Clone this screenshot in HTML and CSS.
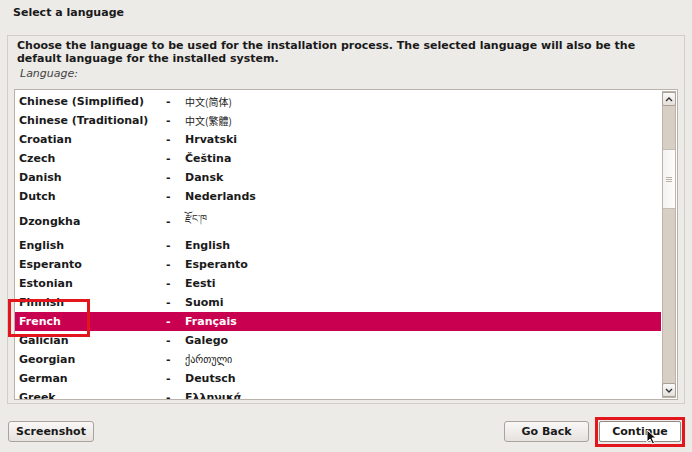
FILE: index.html
```html
<!DOCTYPE html>
<html>
<head>
  <title>Select a language</title>
  <link rel="stylesheet" href="styles.css">
</head>
<body>
  <div class="title">Select a language</div>

  <div class="panel">
    <div class="intro">Choose the language to be used for the installation process. The selected language will also be the default language for the installed system.</div>
    <div class="label">Language:</div>

    <div class="listbox">
      <div class="rows">
        <div class="row"><span>Chinese (Simplified)</span><span>-</span><span class="cjk">中文(简体)</span></div>
        <div class="row"><span>Chinese (Traditional)</span><span>-</span><span class="cjk tc">中文(繁體)</span></div>
        <div class="row"><span>Croatian</span><span>-</span><span>Hrvatski</span></div>
        <div class="row"><span>Czech</span><span>-</span><span>Čeština</span></div>
        <div class="row"><span>Danish</span><span>-</span><span>Dansk</span></div>
        <div class="row"><span>Dutch</span><span>-</span><span>Nederlands</span></div>
        <div class="row tall"><span>Dzongkha</span><span>-</span><span class="thin">རྫོང་ཁ</span></div>
        <div class="row"><span>English</span><span>-</span><span>English</span></div>
        <div class="row"><span>Esperanto</span><span>-</span><span>Esperanto</span></div>
        <div class="row"><span>Estonian</span><span>-</span><span>Eesti</span></div>
        <div class="row"><span>Finnish</span><span>-</span><span>Suomi</span></div>
        <div class="row selected"><span>French</span><span>-</span><span>Français</span></div>
        <div class="row"><span>Galician</span><span>-</span><span>Galego</span></div>
        <div class="row"><span>Georgian</span><span>-</span><span class="thin">ქართული</span></div>
        <div class="row"><span>German</span><span>-</span><span>Deutsch</span></div>
        <div class="row"><span>Greek</span><span>-</span><span>Ελληνικά</span></div>
      </div>

      <div class="scrollbar">
        <div class="arrow">
          <svg width="8" height="5" viewBox="0 0 8 5"><path d="M1 4 L4 1 L7 4" fill="none" stroke="#333" stroke-width="1.4"/></svg>
        </div>
        <div class="trough">
          <div class="thumb">
            <svg width="6" height="5" viewBox="0 0 6 5"><path d="M0 .5h6M0 2.5h6M0 4.5h6" stroke="#b9b1a7" stroke-width="1"/></svg>
          </div>
        </div>
        <div class="arrow">
          <svg width="8" height="5" viewBox="0 0 8 5"><path d="M1 1 L4 4 L7 1" fill="none" stroke="#333" stroke-width="1.4"/></svg>
        </div>
      </div>
    </div>
  </div>

  <div class="buttons">
    <button class="btn shot">Screenshot</button>
    <span class="spacer"></span>
    <button class="btn back">Go Back</button>
    <button class="btn continue">Continue</button>
  </div>

  <!-- annotations over the screenshot -->
  <div class="mark mark-french"></div>
  <div class="mark mark-continue"></div>
  <svg class="pointer" width="11" height="16" viewBox="0 0 11 16">
    <path d="M1 1 L1 13 L4 10 L6.5 15 L8.5 14 L6 9 L10 9 Z" fill="#111" stroke="#fff" stroke-width="1"/>
  </svg>
</body>
</html>
```

FILE: styles.css
```css
body {
  margin: 0;
  background-color: #edebe8;
  font-family: "DejaVu Sans", "Noto Sans CJK SC", sans-serif;
  font-size: 11px;
  color: #1a1a1a;
  position: relative;
  width: 692px;
  height: 452px;
  overflow: hidden;
}

.title {
  height: 35px;
  box-sizing: border-box;
  padding: 6px 13px 0;
  line-height: 14px;
  font-weight: bold;
}

.panel {
  margin: 0 7px;
  height: 369px;
  box-sizing: border-box;
  border: 1px solid #d3cec8;
  padding: 0 6px;
}

.intro {
  padding: 3px 3px 0;
  line-height: 13px;
  font-weight: bold;
}

.label {
  margin-top: 2px;
  padding-left: 6px;
  line-height: 13px;
  font-style: italic;
  color: #444;
}

.listbox {
  margin-top: 9px;
  height: 311px;
  box-sizing: border-box;
  border: 1px solid #b9b2aa;
  background-color: #fff;
  display: flex;
  overflow: hidden;
}

.rows {
  flex: 1;
  padding-top: 2px;
  overflow: hidden;
}

.row {
  display: grid;
  grid-template-columns: 147px 19px 1fr;
  align-items: center;
  height: 19px;
  padding-left: 4px;
  margin-right: 1px;
  font-weight: bold;
  white-space: nowrap;
}

.row.tall {
  height: 30px;
}

.row.selected {
  background-color: #c9004f;
  color: #fff;
}

.cjk {
  font-family: "Noto Sans CJK SC", sans-serif;
  font-weight: normal;
  font-size: 10px;
}

.cjk.tc {
  font-family: "Noto Sans CJK TC", sans-serif;
}

.thin {
  font-weight: normal;
  font-size: 10px;
}

.scrollbar {
  width: 14px;
  margin: 1px 1px 1px 0;
  display: flex;
  flex-direction: column;
  background-color: #d8cfc4;
  border: 1px solid #bdb5ab;
  box-sizing: border-box;
}

.arrow {
  height: 12px;
  display: flex;
  align-items: center;
  justify-content: center;
  background: linear-gradient(#fbfaf9, #e4e0db);
  border: 1px solid #a9a199;
  border-radius: 2px;
  margin: 0 -1px;
}

.trough {
  flex: 1;
  padding-top: 43px;
}

.thumb {
  height: 58px;
  background: linear-gradient(90deg, #f4f2f0, #fdfdfc);
  border-top: 1px solid #c5bdb3;
  border-bottom: 1px solid #c5bdb3;
  display: flex;
  align-items: center;
  justify-content: center;
}

.buttons {
  display: flex;
  align-items: center;
  margin-top: 17px;
  padding: 0 11px 0 8px;
}

.spacer {
  flex: 1;
}

.btn {
  height: 21px;
  border: 1px solid #a8a39d;
  border-radius: 3px;
  background: linear-gradient(#f9f8f7, #e6e2de);
  font-family: "DejaVu Sans", sans-serif;
  font-size: 11px;
  font-weight: bold;
  color: #1a1a1a;
  padding: 0;
}

.shot {
  width: 86px;
}

.back {
  width: 85px;
  margin-right: 10px;
}

.continue {
  width: 82px;
  background: #fff;
  border-color: #8f8a84;
  border-radius: 2px;
}

.mark {
  position: absolute;
  box-sizing: border-box;
  border: 3px solid #e3161d;
}

.mark-french {
  left: 8px;
  top: 299px;
  width: 82px;
  height: 38px;
}

.mark-continue {
  left: 595px;
  top: 417px;
  width: 90px;
  height: 30px;
}

.pointer {
  position: absolute;
  left: 646px;
  top: 429px;
}
```
